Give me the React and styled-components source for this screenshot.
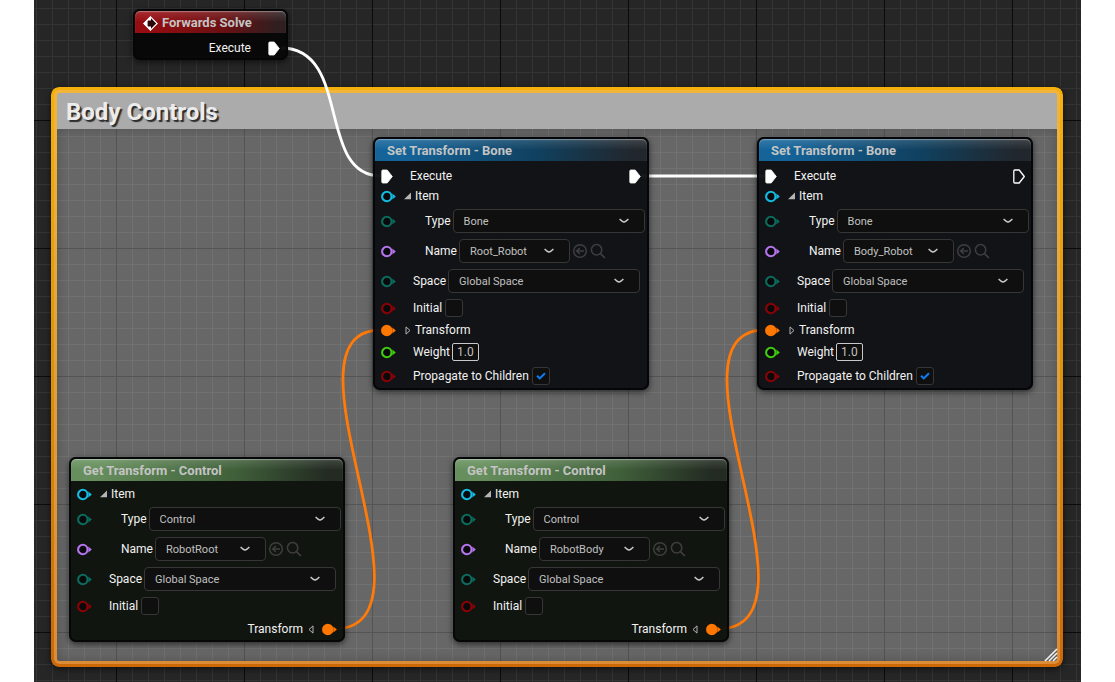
import React, { useId } from "react";
import styled, { createGlobalStyle } from "styled-components";

const GlobalStyle = createGlobalStyle`
  * {
    box-sizing: border-box;
  }
  body {
    margin: 0;
    background: #ffffff;
    font-family: Roboto, "Liberation Sans", sans-serif;
  }
`;

const PIN_COLORS = {
  item: "#14bce4",
  enum: "#0b6b5d",
  name: "#b673ee",
  bool: "#8b0206",
  transform: "#ff7600",
  float: "#40cc10",
};

const Pin = ({ type, filled }) => {
  const color = PIN_COLORS[type];
  return (
    <svg width="15" height="13" viewBox="0 0 15 13" aria-hidden="true">
      <circle
        cx="5.8"
        cy="6.5"
        r="4.7"
        fill={filled ? color : "#08090a"}
        stroke={color}
        strokeWidth="2.1"
      />
      <path d="M11.4 3.6 L14.8 6.5 L11.4 9.4 Z" fill={color} />
    </svg>
  );
};

const ExecPin = ({ hollow }) => (
  <svg width="12" height="15" viewBox="0 0 12 15" aria-hidden="true">
    <path
      d="M1.8 1 H6.2 L11.3 7.5 L6.2 14 H1.8 Q0.8 14 0.8 13 V2 Q0.8 1 1.8 1 Z"
      fill={hollow ? "none" : "#ffffff"}
      stroke="#ffffff"
      strokeWidth={hollow ? 1.3 : 0.8}
      strokeLinejoin="round"
    />
  </svg>
);

const EventIcon = () => (
  <svg width="15" height="15" viewBox="0 0 15 15" aria-hidden="true">
    <path
      d="M7.5 0.9 L14.1 7.5 L7.5 14.1 L0.9 7.5 Z"
      fill="#2a0607"
      stroke="#ffffff"
      strokeWidth="1.2"
    />
    <path d="M8 0.6 V4.6 H4.6 V10.4 H8 V14.4 L7.5 14.6 L0.4 7.5 L7.5 0.4 Z" fill="#ffffff" />
  </svg>
);

const OpenArrow = () => (
  <svg width="8" height="8" viewBox="0 0 8 8" aria-hidden="true">
    <path d="M7 0.4 V7.2 H0 Z" fill="#b4b4b4" />
  </svg>
);

const ClosedArrow = () => (
  <svg width="8" height="9" viewBox="0 0 8 9" aria-hidden="true">
    <path d="M2 0.9 V8.1 L6 4.5 Z" fill="none" stroke="#b4b4b4" />
  </svg>
);

const OutputArrow = () => (
  <svg width="6" height="9" viewBox="0 0 6 9" aria-hidden="true">
    <path d="M5 0.9 V8.1 L1 4.5 Z" fill="none" stroke="#b4b4b4" />
  </svg>
);

const Chevron = () => (
  <svg width="10" height="6" viewBox="0 0 10 6" aria-hidden="true">
    <path
      d="M0.6 1 Q2.6 3.2 5 4.2 Q7.4 3.2 9.4 1"
      fill="none"
      stroke="#c8c8c8"
      strokeWidth="1.4"
    />
  </svg>
);

const UseIcon = () => (
  <svg width="16" height="16" viewBox="0 0 16 16" fill="none" stroke="#3e3e3e">
    <circle cx="8" cy="8" r="6.3" strokeWidth="1.5" />
    <path d="M12 8 H5 M7.8 5 L4.8 8 L7.8 11" strokeWidth="1.6" />
  </svg>
);

const BrowseIcon = () => (
  <svg width="16" height="16" viewBox="0 0 16 16" fill="none" stroke="#3e3e3e">
    <circle cx="6.6" cy="6.8" r="5.2" strokeWidth="1.5" />
    <path d="M10.4 10.6 L15 15" strokeWidth="1.7" />
  </svg>
);

const Dropdown = ({ label, value, width, indent }) => {
  const id = useId();
  return (
    <Field $indent={indent}>
      <label htmlFor={id}>{label}</label>
      <SelectWrap $width={width}>
        <Select id={id} defaultValue={value}>
          <option>{value}</option>
        </Select>
        <Chevron />
      </SelectWrap>
    </Field>
  );
};

const Toggle = ({ label, checked }) => {
  const id = useId();
  return (
    <Field $gap={3}>
      <label htmlFor={id}>{label}</label>
      <CheckWrap>
        <Checkbox id={id} type="checkbox" defaultChecked={checked} />
        {checked && (
          <svg width="10" height="8" viewBox="0 0 10 8" aria-hidden="true">
            <path
              d="M1 3.8 L3.8 6.4 L9 1.2"
              fill="none"
              stroke="#0d7bf2"
              strokeWidth="2.1"
            />
          </svg>
        )}
      </CheckWrap>
    </Field>
  );
};

const ItemRows = ({ type, name }) => (
  <>
    <Row $height={20}>
      <Pin type="item" />
      <Expander>
        <OpenArrow />
        Item
      </Expander>
    </Row>
    <Row $height={30}>
      <Pin type="enum" />
      <Dropdown label="Type" value={type} width={192} indent />
    </Row>
    <Row $height={30}>
      <Pin type="name" />
      <Dropdown label="Name" value={name} width={111} indent />
      <IconButton aria-label="Use selected">
        <UseIcon />
      </IconButton>
      <IconButton aria-label="Browse">
        <BrowseIcon />
      </IconButton>
    </Row>
    <Row $height={30}>
      <Pin type="enum" />
      <Dropdown label="Space" value="Global Space" width={192} />
    </Row>
    <Row $height={24}>
      <Pin type="bool" />
      <Toggle label="Initial" />
    </Row>
  </>
);

const SetTransformNode = ({ x, y, name, connected }) => {
  const weightId = useId();
  return (
    <Node $x={x} $y={y} $width={276} $body="rgba(14, 16, 19, 0.96)">
      <NodeHeader $from="#14649a" $mid="#10405f" $to="#22272d">
        Set Transform - Bone
      </NodeHeader>
      <NodeBody $top={5}>
        <Row $height={20}>
          <ExecPin />
          <ExecLabel>Execute</ExecLabel>
          <ExecPin hollow={!connected} />
        </Row>
        <ItemRows type="Bone" name={name} />
        <Row $height={20}>
          <Pin type="transform" filled />
          <Expander>
            <ClosedArrow />
            Transform
          </Expander>
        </Row>
        <Row $height={24}>
          <Pin type="float" />
          <Field>
            <label htmlFor={weightId}>Weight</label>
            <NumberInput id={weightId} type="text" defaultValue="1.0" />
          </Field>
        </Row>
        <Row $height={24}>
          <Pin type="bool" />
          <Toggle label="Propagate to Children" checked />
        </Row>
      </NodeBody>
    </Node>
  );
};

const GetTransformNode = ({ x, y, name }) => (
  <Node $x={x} $y={y} $width={276} $body="rgba(14, 18, 13, 0.96)">
    <NodeHeader $from="#668f5d" $mid="#40603a" $to="#232b22">
      Get Transform - Control
    </NodeHeader>
    <NodeBody $top={3}>
      <ItemRows type="Control" name={name} />
      <OutputRow $height={22} $gap={8}>
        <OutputLabel>
          Transform
          <OutputArrow />
        </OutputLabel>
        <Pin type="transform" filled />
      </OutputRow>
    </NodeBody>
  </Node>
);

const App = () => {
  return (
    <>
      <GlobalStyle />
      <Page>
        <Canvas>
          <Comment>
            <CommentTitle>Body Controls</CommentTitle>
            <ResizeGrip width="14" height="14" viewBox="0 0 14 14">
              <path
                d="M1 13 L13 1 M5 13 L13 5 M9 13 L13 9"
                stroke="#f0f0f0"
                strokeWidth="1.6"
              />
            </ResizeGrip>
          </Comment>

          <Wires>
            <g stroke="#ffffff" strokeWidth="2.8">
              <path d="M247 48 C318 48 282 176 347 176" />
              <path d="M607 176 H731" />
            </g>
            <g stroke="#ff7a08" strokeWidth="2.8">
              <path d="M300 629 C415 629 236 330 347 330" />
              <path d="M684 629 C799 629 620 330 731 330" />
            </g>
          </Wires>

          <Node $x={99} $y={9} $width={155} $body="rgba(8, 7, 7, 0.96)">
            <NodeHeader $from="#960c10" $mid="#6a1013" $to="#2f1f20" $icon>
              <EventIcon />
              Forwards Solve
            </NodeHeader>
            <NodeBody $top={5}>
              <OutputRow $height={20} $gap={17}>
                Execute
                <ExecPin />
              </OutputRow>
            </NodeBody>
          </Node>

          <SetTransformNode x={339} y={137} name="Root_Robot" connected />
          <SetTransformNode x={723} y={137} name="Body_Robot" />
          <GetTransformNode x={35} y={457} name="RobotRoot" />
          <GetTransformNode x={419} y={457} name="RobotBody" />
        </Canvas>
      </Page>
    </>
  );
};

const Page = styled.main`
  min-height: 100vh;
  padding: 0 34px;
  display: flex;
`;

const Canvas = styled.section`
  position: relative;
  flex: 1;
  overflow: hidden;
  background-color: #262626;
  background-image: linear-gradient(90deg, #0b0b0b 1px, transparent 1px),
    linear-gradient(#0b0b0b 1px, transparent 1px),
    linear-gradient(90deg, #343434 1px, transparent 1px),
    linear-gradient(#343434 1px, transparent 1px);
  background-size: 128px 128px, 128px 128px, 16px 16px, 16px 16px;
  background-position: 82px 0, 0 120px, 2px 0, 0 8px;
`;

const Comment = styled.div`
  position: absolute;
  left: 17px;
  top: 87px;
  width: 1012px;
  height: 580px;
  padding: 6px;
  border-radius: 8px;
  box-shadow: 0 2px 6px rgba(0, 0, 0, 0.6);

  &::before,
  &::after {
    content: "";
    position: absolute;
    inset: 0;
    padding: 6px;
    border-radius: 8px;
    background: linear-gradient(#f6b00c, #dd9108 50%, #cc6806);
    mask: linear-gradient(#000 0 0) content-box exclude, linear-gradient(#000 0 0);
  }
  &::after {
    inset: 3px;
    padding: 3px;
    border-radius: 5px;
    background: linear-gradient(#f2b53a, #dfa03c 50%, #dc8c38);
  }
`;

const CommentTitle = styled.div`
  height: 36px;
  padding: 0 9px;
  background: #ababab;
  color: #ececec;
  font-size: 24px;
  font-weight: 700;
  line-height: 38px;
  text-shadow: 2px 2px 1px #2c2c2c;

  &::after {
    content: "";
    position: absolute;
    inset: 42px 6px 6px;
    background: rgba(255, 255, 255, 0.3);
    box-shadow: inset 0 0 12px rgba(0, 0, 0, 0.2);
  }
`;

const ResizeGrip = styled.svg`
  position: absolute;
  right: 5px;
  bottom: 5px;
  z-index: 1;
`;

const Wires = styled.svg`
  position: absolute;
  inset: 0;
  width: 100%;
  height: 100%;
  fill: none;
`;

const Node = styled.article`
  position: absolute;
  left: ${({ $x }) => $x}px;
  top: ${({ $y }) => $y}px;
  width: ${({ $width }) => $width}px;
  padding: 2px;
  border-radius: 7px;
  background: ${({ $body }) => $body};
  box-shadow: 0 2px 6px rgba(0, 0, 0, 0.6), inset 0 0 0 2px rgba(4, 6, 8, 0.9);
  color: #f2f2f2;
  font-size: 12px;
  line-height: 16px;
`;

const NodeHeader = styled.header`
  display: flex;
  align-items: center;
  gap: 4px;
  height: 22px;
  padding: 2px ${({ $icon }) => ($icon ? 8 : 12)}px 0;
  border-radius: 5px 5px 0 0;
  background: linear-gradient(rgba(255, 255, 255, 0.14), transparent 50%),
    linear-gradient(
      100deg,
      ${({ $from }) => $from} 10%,
      ${({ $mid }) => $mid} 60%,
      ${({ $to }) => $to} 94%
    );
  box-shadow: inset 0 1px 1px rgba(255, 255, 255, 0.35);
  color: #c4c4c4;
  font-size: 13px;
  font-weight: 700;
`;

const NodeBody = styled.div`
  padding: ${({ $top }) => $top}px 6px 0;
`;

const Row = styled.div`
  display: flex;
  align-items: center;
  height: ${({ $height }) => $height}px;

  > svg {
    flex: none;
  }
`;

const OutputRow = styled(Row)`
  justify-content: flex-end;
  gap: ${({ $gap }) => $gap}px;
`;

const OutputLabel = styled.span`
  display: flex;
  align-items: center;
  gap: 5px;
`;

const ExecLabel = styled.span`
  flex: 1;
  margin-left: 17px;
`;

const Expander = styled.button`
  display: flex;
  align-items: center;
  gap: 3px;
  margin-left: 8px;
  padding: 0;
  border: 0;
  background: none;
  color: inherit;
  font: inherit;
`;

const Field = styled.div`
  display: flex;
  align-items: center;
  gap: ${({ $gap = 2 }) => $gap}px;
  margin-left: ${({ $indent }) => ($indent ? 29 : 17)}px;
`;

const SelectWrap = styled.div`
  position: relative;
  width: ${({ $width }) => $width}px;

  svg {
    position: absolute;
    right: 16px;
    top: 9px;
    pointer-events: none;
  }
`;

const Select = styled.select`
  display: block;
  appearance: none;
  width: 100%;
  height: 24px;
  padding: 0 10px;
  border: 1px solid #363636;
  border-radius: 4px;
  background: #0f0f0f;
  color: #c0c0c0;
  font-family: inherit;
  font-size: 11px;
`;

const IconButton = styled.button`
  display: flex;
  margin-left: 2px;
  padding: 0;
  border: 0;
  background: none;
`;

const CheckWrap = styled.span`
  position: relative;
  display: flex;

  svg {
    position: absolute;
    left: 4px;
    top: 5px;
    pointer-events: none;
  }
`;

const Checkbox = styled.input`
  appearance: none;
  width: 18px;
  height: 18px;
  margin: 0;
  border: 1px solid #363636;
  border-radius: 3px;
  background: #0f0f0f;
`;

const NumberInput = styled.input`
  width: 27px;
  height: 18px;
  padding: 0 4px;
  border: 1px solid #c8c8c8;
  border-radius: 2px;
  background: #0f0f0f;
  color: #c0c0c0;
  font-family: inherit;
  font-size: 12px;
`;

export default App;
